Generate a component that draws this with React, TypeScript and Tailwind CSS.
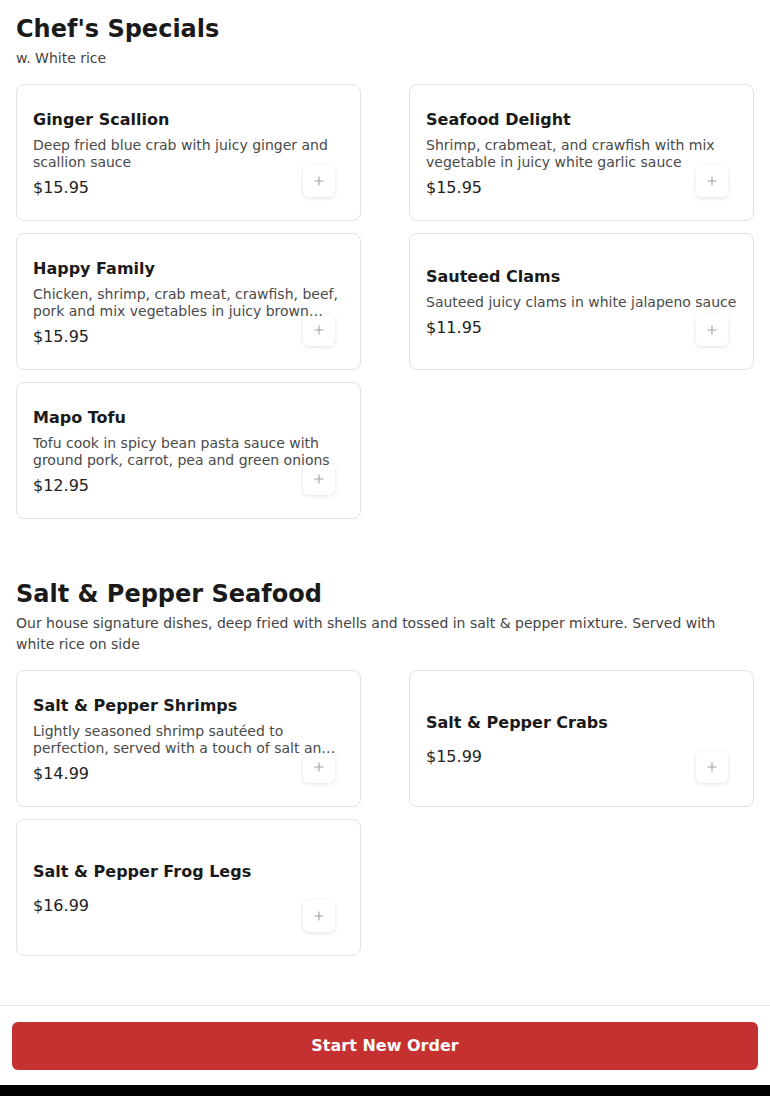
import React from "react";

type Item = { name: string; desc?: string; price: string };

const chef: Item[] = [
  { name: "Ginger Scallion", desc: "Deep fried blue crab with juicy ginger and scallion sauce", price: "$15.95" },
  { name: "Seafood Delight", desc: "Shrimp, crabmeat, and crawfish with mix vegetable in juicy white garlic sauce", price: "$15.95" },
  { name: "Happy Family", desc: "Chicken, shrimp, crab meat, crawfish, beef, pork and mix vegetables in juicy brown sauce", price: "$15.95" },
  { name: "Sauteed Clams", desc: "Sauteed juicy clams in white jalapeno sauce", price: "$11.95" },
  { name: "Mapo Tofu", desc: "Tofu cook in spicy bean pasta sauce with ground pork, carrot, pea and green onions", price: "$12.95" },
];

const salt: Item[] = [
  { name: "Salt & Pepper Shrimps", desc: "Lightly seasoned shrimp sautéed to perfection, served with a touch of salt and pepper", price: "$14.99" },
  { name: "Salt & Pepper Crabs", price: "$15.99" },
  { name: "Salt & Pepper Frog Legs", price: "$16.99" },
];

function Card({ item }: { item: Item }) {
  return (
    <div className="relative h-[137px] rounded-lg border border-[#e2e2e2] bg-white px-4 pt-[2px] flex flex-col justify-center">
      <button className="absolute right-[25px] bottom-[23px] w-[32px] h-[32px] rounded-md bg-white shadow-[0_1px_4px_rgba(0,0,0,0.12)] flex items-center justify-center">
        <svg width="10" height="10" viewBox="0 0 10 10">
          <path d="M5 0.5v9M0.5 5h9" stroke="#a0a0a0" strokeWidth="1.1" />
        </svg>
      </button>
      <div className="relative text-[16px] font-bold leading-[22px] text-[#1a1a1a]">{item.name}</div>
      {item.desc && (
        <div className="relative mt-[6px] text-[14px] leading-[17px] text-[#4a4a4a] line-clamp-2">{item.desc}</div>
      )}
      <div className={`relative ${item.desc ? "mt-[6px]" : "mt-[12px]"} text-[16px] leading-[22px] text-[#222]`}>{item.price}</div>
    </div>
  );
}

function Section({ title, desc, items }: { title: string; desc: string; items: Item[] }) {
  return (
    <section>
      <h2 className="text-[24px] font-bold leading-[32px] text-[#1a1a1a]">{title}</h2>
      <p className="mt-[3px] text-[14px] leading-[21px] text-[#444]">{desc}</p>
      <div className="mt-[15px] grid grid-cols-2 gap-x-[48px] gap-y-[12px]">
        {items.map((it) => (
          <Card key={it.name} item={it} />
        ))}
      </div>
    </section>
  );
}

export default function App() {
  return (
    <div className="min-h-[1096px] bg-white" style={{ fontFamily: '"DejaVu Sans", sans-serif' }}>
      <div className="px-4 pt-[13px] pb-[160px] flex flex-col gap-[59px]">
        <Section title="Chef's Specials" desc="w. White rice" items={chef} />
        <Section
          title="Salt & Pepper Seafood"
          desc="Our house signature dishes, deep fried with shells and tossed in salt & pepper mixture. Served with white rice on side"
          items={salt}
        />
      </div>
      <div className="fixed bottom-0 left-0 right-0">
        <div className="bg-white border-t border-[#e5e5e5] px-[12px] pt-[16px] pb-[15px]">
          <button className="w-full h-[48px] rounded-md bg-[#c53030] text-white text-[16px] font-bold">
            Start New Order
          </button>
        </div>
        <div className="h-[11px] bg-black" />
      </div>
    </div>
  );
}
